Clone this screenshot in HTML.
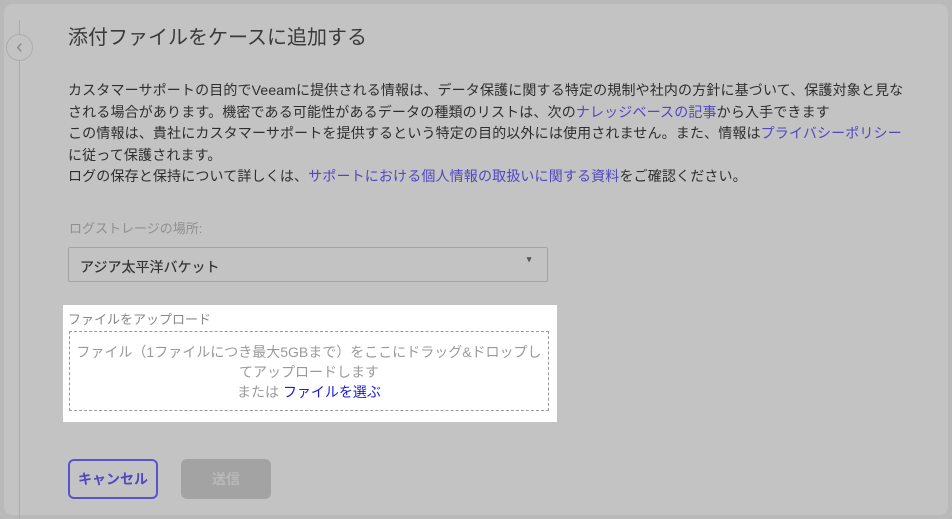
<!DOCTYPE html>
<html><head><meta charset="utf-8"><style>
*{margin:0;padding:0;box-sizing:border-box}
body{width:952px;height:519px;background:#b9b9b9;font-family:"Liberation Sans","Noto Sans CJK JP",sans-serif;position:relative;overflow:hidden}
.card{position:absolute;left:4px;top:4px;width:944px;height:511px;background:#c3c3c3;border-radius:8px}
.vline{position:absolute;left:19px;top:20px;width:1px;height:499px;background:#acacac}
.circ{position:absolute;left:6px;top:34px;width:27px;height:27px;border-radius:50%;border:1px solid #acacac;background:#c3c3c3;color:#8a8a8a;font-size:20px;text-align:center;line-height:24px}
h1{position:absolute;left:68px;top:21px;font-size:20px;font-weight:normal;color:#3a3a3a}
.body{position:absolute;left:68px;top:80px;width:900px;font-size:14px;line-height:21.6px;letter-spacing:0.15px;color:#2e2e2e;white-space:nowrap}
a{color:#5246c2;text-decoration:none}
.lbl{position:absolute;left:69px;top:218px;font-size:13px;color:#8f8f8f}
.sel{position:absolute;left:68px;top:247px;width:480px;height:35px;border:1px solid #a3a3a3;border-radius:2px;font-size:14px;color:#333;padding:9px 11px;text-shadow:0 0 0.4px #333}
.sel span{position:absolute;right:14px;top:7px;font-size:8px;color:#555}
.up{position:absolute;left:63px;top:305px;width:494px;height:117px;background:#fff}
.up .t{position:absolute;left:5px;top:4px;font-size:13px;color:#888}
.drop{position:absolute;left:6px;top:26px;width:480px;height:80px;border:1px dashed #999;text-align:center;font-size:14px;line-height:20px;color:#9a9a9a;padding:10px 4px 0}
.drop a{color:#1a1ae0}
.btn1{position:absolute;left:68px;top:459px;width:90px;height:40px;border:2px solid #5d52cc;border-radius:6px;color:#5246c2;font-size:14px;font-weight:bold;text-align:center;line-height:36px}
.btn2{position:absolute;left:181px;top:459px;width:90px;height:40px;background:#a3a3a3;border-radius:6px;color:#b9b9b9;font-size:14px;font-weight:bold;text-align:center;line-height:40px}
</style></head><body>
<div class="card"></div>
<div class="vline"></div>
<div class="circ">&#8249;</div>
<h1>添付ファイルをケースに追加する</h1>
<div class="body">カスタマーサポートの目的でVeeamに提供される情報は、データ保護に関する特定の規制や社内の方針に基づいて、保護対象と見な<br>される場合があります。機密である可能性があるデータの種類のリストは、次の<a>ナレッジベースの記事</a>から入手できます<br>この情報は、貴社にカスタマーサポートを提供するという特定の目的以外には使用されません。また、情報は<a>プライバシーポリシー</a><br>に従って保護されます。<br>ログの保存と保持について詳しくは、<a>サポートにおける個人情報の取扱いに関する資料</a>をご確認ください。</div>
<div class="lbl">ログストレージの場所:</div>
<div class="sel">アジア太平洋バケット<span>▼</span></div>
<div class="up"><div class="t">ファイルをアップロード</div>
<div class="drop">ファイル（1ファイルにつき最大5GBまで）をここにドラッグ&amp;ドロップし<br>てアップロードします<br>または <a>ファイルを選ぶ</a></div></div>
<div class="btn1">キャンセル</div>
<div class="btn2">送信</div>
</body></html>
